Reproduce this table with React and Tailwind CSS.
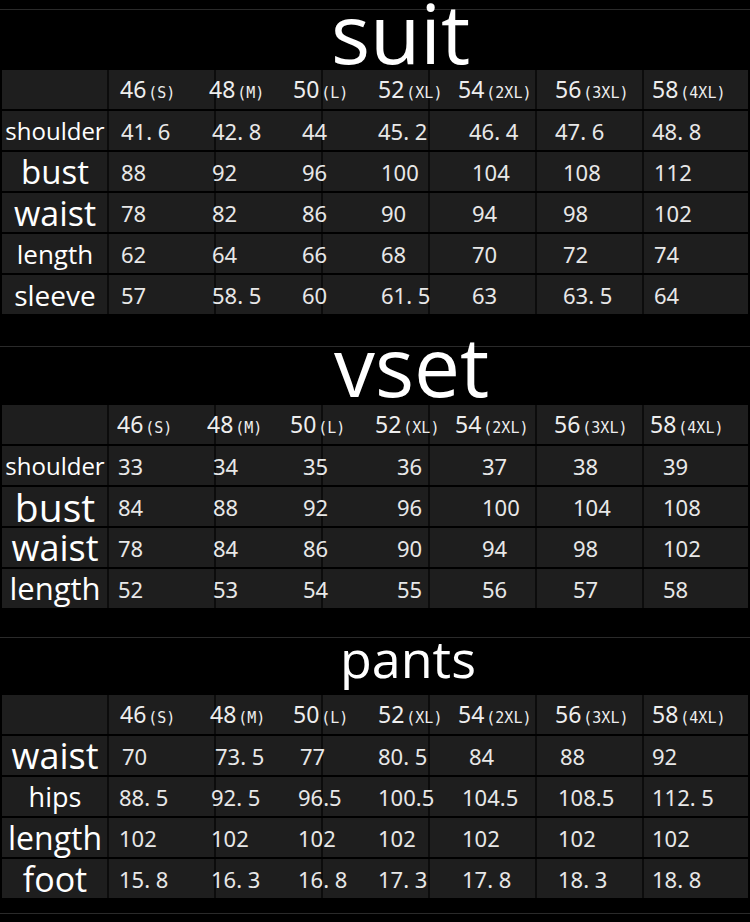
import React from "react"

const SIZES = [
  ["46", "(S)"],
  ["48", "(M)"],
  ["50", "(L)"],
  ["52", "(XL)"],
  ["54", "(2XL)"],
  ["56", "(3XL)"],
  ["58", "(4XL)"],
]

const SECTIONS = [
  {
    title: "suit",
    band: "h-[60px] pl-[329px]",
    titleText: "text-[82px] leading-[44px]",
    header: "grid-cols-[118px_89px_84px_85px_80px_97px_97px_1fr]",
    rows: [
      { label: "shoulder", size: "text-[24px]", tpl: "grid-cols-[119px_91px_90px_76px_91px_86px_97px_1fr]", values: ["41. 6", "42. 8", "44", "45. 2", "46. 4", "47. 6", "48. 8"] },
      { label: "bust", size: "text-[33px]", tpl: "grid-cols-[119px_91px_90px_79px_91px_91px_91px_1fr]", values: ["88", "92", "96", "100", "104", "108", "112"] },
      { label: "waist", size: "text-[34px]", tpl: "grid-cols-[119px_91px_90px_79px_91px_91px_91px_1fr]", values: ["78", "82", "86", "90", "94", "98", "102"] },
      { label: "length", size: "text-[26px]", tpl: "grid-cols-[119px_91px_90px_79px_91px_91px_91px_1fr]", values: ["62", "64", "66", "68", "70", "72", "74"] },
      { label: "sleeve", size: "text-[28px]", tpl: "grid-cols-[119px_91px_90px_79px_91px_91px_91px_1fr]", values: ["57", "58. 5", "60", "61. 5", "63", "63. 5", "64"] },
    ],
    after: "h-[32px]",
  },
  {
    title: "vset",
    band: "h-[58px] pl-[332px]",
    titleText: "text-[82px] leading-[36px]",
    header: "grid-cols-[115px_90px_83px_85px_80px_99px_96px_1fr]",
    rows: [
      { label: "shoulder", size: "text-[24px]", tpl: "grid-cols-[116px_95px_90px_94px_85px_91px_90px_1fr]", values: ["33", "34", "35", "36", "37", "38", "39"] },
      { label: "bust", size: "text-[39px]", tpl: "grid-cols-[116px_95px_90px_94px_85px_91px_90px_1fr]", values: ["84", "88", "92", "96", "100", "104", "108"] },
      { label: "waist", size: "text-[36px]", tpl: "grid-cols-[116px_95px_90px_94px_85px_91px_90px_1fr]", values: ["78", "84", "86", "90", "94", "98", "102"] },
      { label: "length", size: "text-[31px]", tpl: "grid-cols-[116px_95px_90px_94px_85px_91px_90px_1fr]", values: ["52", "53", "54", "55", "56", "57", "58"] },
    ],
    after: "h-[29px]",
  },
  {
    title: "pants",
    band: "h-[57px] pl-[338px]",
    titleText: "text-[52px] leading-[40px]",
    header: "grid-cols-[118px_90px_83px_85px_80px_97px_97px_1fr]",
    rows: [
      { label: "waist", size: "text-[36px]", tpl: "grid-cols-[120px_93px_85px_78px_91px_91px_92px_1fr]", values: ["70", "73. 5", "77", "80. 5", "84", "88", "92"] },
      { label: "hips", size: "text-[27px]", tpl: "grid-cols-[117px_92px_87px_80px_84px_96px_94px_1fr]", values: ["88. 5", "92. 5", "96.5", "100.5", "104.5", "108.5", "112. 5"] },
      { label: "length", size: "text-[32px]", tpl: "grid-cols-[117px_92px_87px_80px_84px_96px_94px_1fr]", values: ["102", "102", "102", "102", "102", "102", "102"] },
      { label: "foot", size: "text-[34px]", tpl: "grid-cols-[117px_92px_87px_80px_84px_96px_94px_1fr]", values: ["15. 8", "16. 3", "16. 8", "17. 3", "17. 8", "18. 3", "18. 8"] },
    ],
    after: "h-[15px]",
  },
]

function Row({ tpl, children }) {
  return (
    <div
      className={`grid ${tpl} h-[39px] items-center bg-[repeating-linear-gradient(90deg,#1e1e1e_0_105px,#0c0c0c_105px_107px)]`}
    >
      {children}
    </div>
  )
}

function Section({ section }) {
  return (
    <div>
      <div className="h-px bg-[#2a2a2a] -mx-[2px]" />
      <div className={`flex items-start ${section.band}`}>
        <div className={`${section.titleText} text-white font-['Open_Sans',sans-serif]`}>
          {section.title}
        </div>
      </div>
      <div className="flex flex-col gap-[2px]">
        <Row tpl={section.header}>
          <div />
          {SIZES.map(([num, tag]) => (
            <div key={num} className="whitespace-nowrap text-[#eeeeee] flex items-baseline leading-none">
              <span className="text-[23px] font-['Noto_Sans',sans-serif]">{num}</span>
              <span className="text-[15px] ml-[2px] font-['DejaVu_Sans_Mono',monospace]">{tag}</span>
            </div>
          ))}
        </Row>
        {section.rows.map((row) => (
          <Row key={row.label} tpl={row.tpl}>
            <div
              className={`w-[106px] text-center leading-none text-white whitespace-nowrap font-['Open_Sans',sans-serif] ${row.size}`}
            >
              {row.label}
            </div>
            {row.values.map((v, i) => (
              <div
                key={i}
                className="whitespace-nowrap leading-none text-[22px] text-[#e8e8e8] font-['Noto_Sans',sans-serif]"
              >
                {v}
              </div>
            ))}
          </Row>
        ))}
      </div>
      <div className={section.after} />
    </div>
  )
}

export default function App() {
  return (
    <div className="w-[750px] h-[922px] bg-black px-[2px] overflow-hidden">
      <div className="h-[9px]" />
      {SECTIONS.map((s) => (
        <Section key={s.title} section={s} />
      ))}
      <div className="h-px bg-[#2a2a2a] -mx-[2px]" />
    </div>
  )
}
